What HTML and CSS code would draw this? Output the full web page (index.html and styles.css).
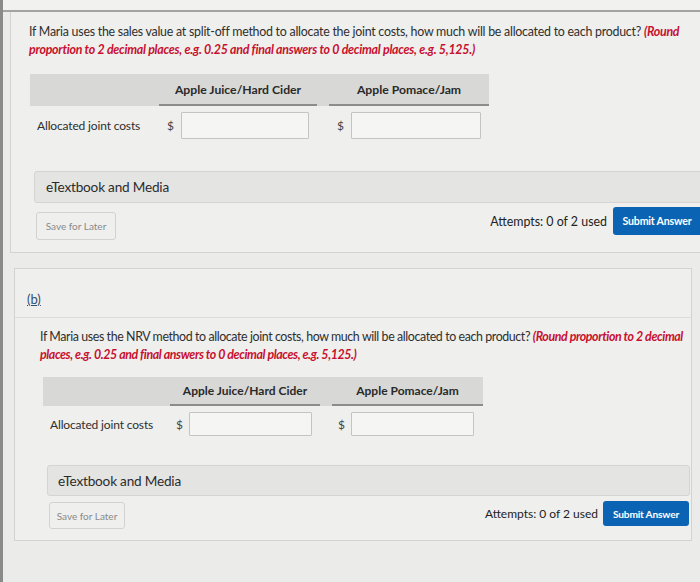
FILE: index.html
```html
<!DOCTYPE html>
<html lang="en">
<head>
<meta charset="UTF-8" />
<meta name="viewport" content="width=device-width, initial-scale=1" />
<title>Joint cost allocation</title>
<link rel="stylesheet" href="styles.css">
</head>
<body>
<div class="screen">
  <div class="topbar"></div>

  <section class="part part-a">
    <p class="question">If Maria uses the sales value at split-off method to allocate the joint costs, how much will be allocated to each product? <em class="hint">(Round proportion to 2 decimal places, e.g. 0.25 and final answers to 0 decimal places, e.g. 5,125.)</em></p>

    <div class="answer-table">
      <div class="head-row">
        <div class="label-cell"></div>
        <div class="col-head">Apple Juice/Hard Cider</div>
        <div class="col-head">Apple Pomace/Jam</div>
      </div>
      <div class="input-row">
        <div class="label-cell">Allocated joint costs</div>
        <div class="cell"><span class="dollar">$</span><input class="amount" type="text" aria-label="Apple Juice/Hard Cider"></div>
        <div class="cell"><span class="dollar">$</span><input class="amount" type="text" aria-label="Apple Pomace/Jam"></div>
      </div>
    </div>

    <div class="media-bar">eTextbook and Media</div>

    <div class="actions">
      <button class="btn-save">Save for Later</button>
      <div class="submit-group">
        <span class="attempts">Attempts: 0 of 2 used</span>
        <button class="btn-submit">Submit Answer</button>
      </div>
    </div>
  </section>

  <section class="part part-b">
    <div class="part-label"><a href="#">(b)</a></div>
    <div class="part-body">
      <p class="question">If Maria uses the NRV method to allocate joint costs, how much will be allocated to each product? <em class="hint">(Round proportion to 2 decimal places, e.g. 0.25 and final answers to 0 decimal places, e.g. 5,125.)</em></p>

      <div class="answer-table">
        <div class="head-row">
          <div class="label-cell"></div>
          <div class="col-head">Apple Juice/Hard Cider</div>
          <div class="col-head">Apple Pomace/Jam</div>
        </div>
        <div class="input-row">
          <div class="label-cell">Allocated joint costs</div>
          <div class="cell"><span class="dollar">$</span><input class="amount" type="text" aria-label="Apple Juice/Hard Cider"></div>
          <div class="cell"><span class="dollar">$</span><input class="amount" type="text" aria-label="Apple Pomace/Jam"></div>
        </div>
      </div>

      <div class="media-bar">eTextbook and Media</div>

      <div class="actions">
        <button class="btn-save">Save for Later</button>
        <div class="submit-group">
          <span class="attempts">Attempts: 0 of 2 used</span>
          <button class="btn-submit">Submit Answer</button>
        </div>
      </div>
    </div>
  </section>
</div>
</body>
</html>
```

FILE: styles.css
```css
:root {
  --page-bg: #ebebe9;
  --card-bg: #efefed;
  --line: #d3d3d1;
  --head-bg: #d8d8d6;
  --head-line: #8c8c8a;
  --text: #2e2e2e;
  --hint: #c8102e;
  --blue: #0b63b3;
  --font: Lato, "Open Sans", sans-serif;
}

* {
  box-sizing: border-box;
}

html, body {
  margin: 0;
  height: 100%;
  overflow: hidden;
}

body {
  background: var(--page-bg);
  color: var(--text);
  font-family: var(--font);
}

.screen {
  height: 100%;
  border-left: 3px solid #8a8a88;
  padding-left: 7px;
}

.topbar {
  height: 12px;
  margin-left: -7px;
  background: #f1f1ef;
  border-bottom: 2px solid #a3a3a1;
}

.part {
  background: var(--card-bg);
  border: 1px solid var(--line);
}

.question {
  margin: 0;
  font-size: 12.4px;
  line-height: 18px;
  letter-spacing: -0.25px;
}

.hint {
  color: var(--hint);
  font-weight: 700;
}

/* answer table: label column, first product, second product */
.head-row,
.input-row {
  display: grid;
  align-items: center;
}

.head-row {
  background: var(--head-bg);
}

.col-head {
  align-self: stretch;
  display: flex;
  align-items: center;
  justify-content: center;
  font-size: 12.2px;
  font-weight: 700;
  color: #2a2a2a;
  border-bottom: 2px solid var(--head-line);
}

.head-row .col-head:last-child,
.input-row .cell:last-child {
  margin-left: 12px;
}

.label-cell {
  font-size: 12px;
  letter-spacing: -0.15px;
  padding-left: 7px;
}

.cell {
  display: flex;
  align-items: center;
}

.dollar {
  font-size: 12px;
  color: #444;
}

.amount {
  background: #f5f5f3;
  border: 1px solid #c4c4c2;
  border-radius: 1px;
  padding: 0;
}

.media-bar {
  background: #e4e4e2;
  border: 1px solid #d4d4d2;
  border-radius: 3px;
  font-size: 13.6px;
  letter-spacing: -0.2px;
  color: #2c2c2c;
  display: flex;
  align-items: center;
}

.actions {
  display: flex;
  justify-content: space-between;
  align-items: flex-start;
}

.btn-save {
  font-family: var(--font);
  font-size: 10px;
  color: #8a8a8a;
  background: #efefed;
  border: 1px solid #d2d2d0;
  border-radius: 3px;
  padding: 0;
}

.submit-group {
  display: flex;
  align-items: center;
}

.attempts {
  font-size: 12.4px;
  color: #222;
}

.btn-submit {
  font-family: var(--font);
  font-weight: 700;
  font-size: 10.6px;
  color: #fff;
  background: var(--blue);
  border: none;
  border-radius: 3px;
  padding: 0;
  letter-spacing: -0.2px;
}

/* part (a) */
.part-a {
  height: 241px;
  margin-right: -20px;
  border-top: none;
  padding: 11px 0 0 18px;
}

.part-a .answer-table {
  margin-top: 15px;
  margin-left: 1px;
}

.part-a .head-row,
.part-a .input-row {
  grid-template-columns: 129px 158px 172px;
  width: 459px;
}

.part-a .head-row {
  height: 32px;
}

.part-a .input-row {
  padding-top: 6px;
}

.part-a .dollar {
  margin: 0 7px 0 8px;
}

.part-a .amount {
  width: 128px;
  height: 27px;
}

.part-a .cell:last-child .amount {
  width: 130px;
}

.part-a .media-bar {
  margin: 32px 0 0 5px;
  height: 32px;
  padding-left: 11px;
}

.part-a .actions {
  margin: 4px 10px 0 7px;
}

.part-a .btn-save {
  width: 80px;
  height: 28px;
  margin-top: 5px;
}

.part-a .attempts {
  margin-right: 6px;
}

.part-a .btn-submit {
  width: 96px;
  height: 28px;
  padding-right: 8px;
}

/* part (b) */
.part-b {
  margin: 15px 8px 0 4px;
  height: 273px;
}

.part-label {
  height: 49px;
  padding: 19px 0 0 12px;
  border-bottom: 1px solid #dcdcda;
}

.part-label a {
  color: #2f4f73;
  font-size: 13px;
  text-decoration: underline;
}

.part-body {
  padding: 10px 0 0 25px;
}

.part-b .question {
  letter-spacing: -0.4px;
}

.part-b .answer-table {
  margin-top: 13px;
  margin-left: 3px;
}

.part-b .head-row,
.part-b .input-row {
  grid-template-columns: 127px 150px 163px;
  width: 440px;
}

.part-b .head-row {
  height: 29px;
}

.part-b .col-head {
  font-size: 12px;
}

.part-b .input-row {
  padding-top: 6px;
}

.part-b .dollar {
  margin: 0 6px 0 6px;
}

.part-b .amount {
  width: 123px;
  height: 24px;
}

.part-b .media-bar {
  margin: 29px 1px 0 7px;
  height: 31px;
  padding-left: 10px;
}

.part-b .actions {
  margin: 5px 2px 0 9px;
}

.part-b .btn-save {
  width: 76px;
  height: 27px;
  margin-top: 1px;
}

.part-b .attempts {
  font-size: 12px;
  margin-right: 5px;
}

.part-b .btn-submit {
  width: 86px;
  height: 25px;
  font-size: 10.2px;
}
```
